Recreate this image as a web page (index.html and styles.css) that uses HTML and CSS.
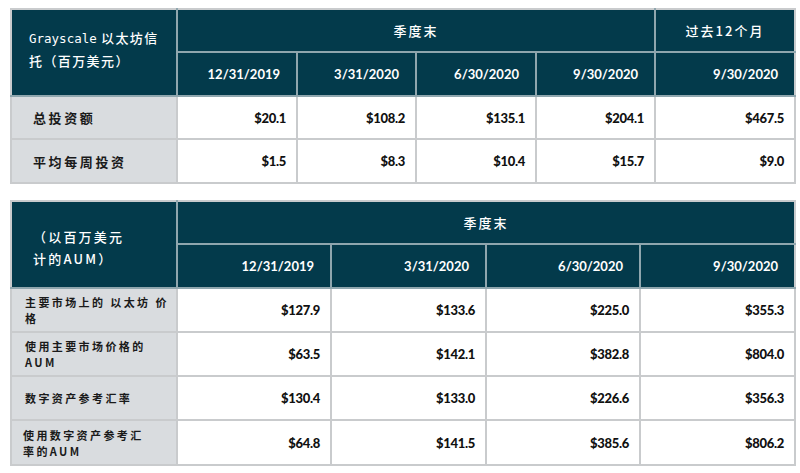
FILE: index.html
```html
<!DOCTYPE html>
<html lang="zh">
<head>
<meta charset="utf-8">
<link rel="stylesheet" href="styles.css">
</head>
<body>
<div class="page">
  <table class="grid grid-top">
    <colgroup>
      <col class="c-label"><col class="c120"><col class="c119"><col class="c120"><col class="c119"><col class="c139">
    </colgroup>
    <thead>
      <tr class="h1">
        <th rowspan="2" class="corner"><span class="mono">Grayscale</span> 以太坊信<br>托（百万美元）</th>
        <th colspan="4" class="group">季度末</th>
        <th class="group">过去12个月</th>
      </tr>
      <tr class="h2">
        <th class="date">12/31/2019</th>
        <th class="date">3/31/2020</th>
        <th class="date">6/30/2020</th>
        <th class="date">9/30/2020</th>
        <th class="date">9/30/2020</th>
      </tr>
    </thead>
    <tbody>
      <tr class="r1">
        <td class="label">总投资额</td>
        <td class="num">$20.1</td><td class="num">$108.2</td><td class="num">$135.1</td><td class="num">$204.1</td><td class="num">$467.5</td>
      </tr>
      <tr class="r2">
        <td class="label">平均每周投资</td>
        <td class="num">$1.5</td><td class="num">$8.3</td><td class="num">$10.4</td><td class="num">$15.7</td><td class="num">$9.0</td>
      </tr>
    </tbody>
  </table>

  <table class="grid grid-bottom">
    <colgroup>
      <col class="c-label"><col class="c154"><col class="c155"><col class="c154"><col class="c155">
    </colgroup>
    <thead>
      <tr class="h1">
        <th rowspan="2" class="corner corner-b">（以百万美元<br>计的AUM）</th>
        <th colspan="4" class="group">季度末</th>
      </tr>
      <tr class="h2">
        <th class="date">12/31/2019</th>
        <th class="date">3/31/2020</th>
        <th class="date">6/30/2020</th>
        <th class="date">9/30/2020</th>
      </tr>
    </thead>
    <tbody>
      <tr class="rb">
        <td class="label small">主要市场上的 以太坊 价<br>格</td>
        <td class="num">$127.9</td><td class="num">$133.6</td><td class="num">$225.0</td><td class="num">$355.3</td>
      </tr>
      <tr class="rb">
        <td class="label small">使用主要市场价格的<br>AUM</td>
        <td class="num">$63.5</td><td class="num">$142.1</td><td class="num">$382.8</td><td class="num">$804.0</td>
      </tr>
      <tr class="rb">
        <td class="label small">数字资产参考汇率</td>
        <td class="num">$130.4</td><td class="num">$133.0</td><td class="num">$226.6</td><td class="num">$356.3</td>
      </tr>
      <tr class="rb rb-last">
        <td class="label small tight">使用数字资产参考汇<br>率的AUM</td>
        <td class="num">$64.8</td><td class="num">$141.5</td><td class="num">$385.6</td><td class="num">$806.2</td>
      </tr>
    </tbody>
  </table>
</div>
</body>
</html>
```

FILE: styles.css
```css
html, body {
  margin: 0;
  padding: 0;
  background: #ffffff;
}

.page {
  padding: 8px 0 0 10px;
  display: flex;
  flex-direction: column;
  gap: 16px;
  font-family: "Noto Sans CJK SC", "Noto Sans", sans-serif;
}

.grid {
  border-collapse: collapse;
  table-layout: fixed;
  border: 2px solid #c9cbcd;
}

.grid-top { width: 784px; }
.grid-bottom { width: 785px; }

.c-label { width: 166px; }
.c120 { width: 120px; }
.c119 { width: 119px; }
.c139 { width: 140px; }
.c154 { width: 154px; }
.c155 { width: 155px; }

.grid th {
  background: #033a4b;
  color: #ffffff;
  border: 2px solid #8fa6ae;
  padding: 0;
}

.grid thead tr:first-child th {
  border-top-color: #c9cbcd;
}
.grid thead th:first-child { border-left-color: #c9cbcd; }
.grid thead th:last-child { border-right-color: #c9cbcd; }

.h1 th { height: 41px; }
.h2 th { height: 42px; }

.corner {
  text-align: left;
  vertical-align: middle;
  font-size: 13px;
  font-weight: 500;
  line-height: 22px;
  letter-spacing: 1.4px;
  padding: 0 0 6px 17px !important;
}

.corner .mono {
  font-family: "DejaVu Sans Mono", monospace;
  font-size: 12.5px;
  letter-spacing: 0;
}

.corner-b {
  letter-spacing: 2.2px;
  padding: 6px 0 0 21px !important;
}

.group {
  font-size: 13px;
  font-weight: 500;
  letter-spacing: 2px;
  text-align: center;
}

.date {
  font-family: "Lato", "Noto Sans", sans-serif;
  font-weight: 700;
  font-size: 13px;
  text-align: right;
  padding-right: 16px !important;
}

.grid td {
  border: 2px solid #c9cbcd;
  padding: 0;
}

.r1 td { height: 41px; }
.r2 td { height: 42px; }
.rb td { height: 42px; }
.rb-last td { height: 43px; }

.label {
  background: #d9dcdf;
  color: #1a1a1a;
  font-size: 13px;
  font-weight: 700;
  letter-spacing: 2.6px;
  padding-left: 21px !important;
}

.label.small {
  font-size: 11px;
  letter-spacing: 2.4px;
  line-height: 16px;
  padding-left: 13px !important;
}

.label.small.tight { padding-left: 11px !important; }

.num {
  font-family: "Lato", "Noto Sans", sans-serif;
  font-weight: 900;
  font-size: 13px;
  color: #111111;
  text-align: right;
  padding-right: 10px !important;
  letter-spacing: -0.3px;
}
```
